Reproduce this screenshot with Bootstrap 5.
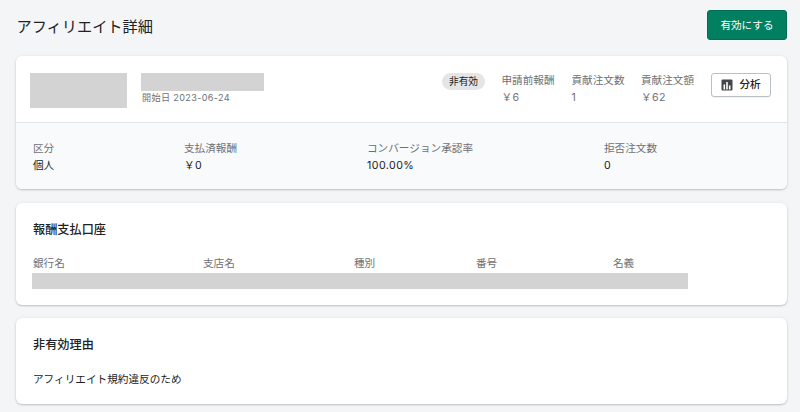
<!DOCTYPE html>
<html lang="ja">
<head>
<meta charset="utf-8">
<title>アフィリエイト詳細</title>
<link href="https://cdn.jsdelivr.net/npm/bootstrap@5.3.0/dist/css/bootstrap.min.css" rel="stylesheet">
<style>
html,body{height:412px;overflow:hidden}
body{background:#f4f5f7;color:#202223;font-family:Inter,"Noto Sans CJK JP",sans-serif;font-size:10.64px;line-height:15.2px}
.page-wrap{padding:10px 13px 0 16px}
.page-head{height:46px}
.page-title{font-size:15.2px;line-height:22px;font-weight:400;margin:0 0 0 .5px;padding-bottom:12px}
.btn-activate{background:#008060;border:1px solid #006e52;color:#fff;width:80px;height:30px;font-size:10.64px;line-height:15px;padding:0;border-radius:3px}
.sheet{background:#fff;border:0;border-radius:6px;box-shadow:0 0 4px rgba(23,24,24,.05),0 1px 2px rgba(0,0,0,.2);overflow:hidden}
.sheet-top{height:66px;padding:17px 16px 0 14px}
.thumb{width:97px;height:35px;background:#d3d3d3;margin-right:14px}
.shop-name{width:123px;height:18px;background:#d3d3d3}
.start-date{font-size:9.12px;line-height:14px;color:#6d7175;padding-left:1px;letter-spacing:.35px}
.state-pill{background:#e4e5e7;border-radius:9px;width:43px;height:17px;font-size:9.7px;line-height:17px;text-align:center;margin-right:16.500px}
.metric{width:70px;color:#6d7175}
.metric-narrow{width:69.500px}
.metric div+div{margin-top:2px}
.num-val{letter-spacing:.45px}
.btn-analysis{width:60px;height:24px;background:#fff;border:1px solid #babfc3;border-radius:3px;font-size:10.64px;font-weight:500;line-height:14px;padding:0;color:#202223;box-shadow:0 1px 0 rgba(0,0,0,.05);column-gap:6px}
.sheet-foot{height:67px;background:#f9fafb;border-top:1px solid #e1e3e5;padding:18px 0 0 17px}
.sheet-foot .num-val,.sheet-foot .plain-val{margin-top:1.500px}
.muted-label{color:#6d7175}
.f1{width:151px}.f2{width:183px}.f3{width:237px}
.gap-card{margin-top:14px}
.sheet-pad{padding:18px 17px 0 17px}
.sec-title{font-size:12.16px;line-height:17px;font-weight:500;margin:0}
.bank-row{margin-top:18px}
.b1{width:170px}.b2{width:151px}.b3{width:122px}.b4{width:137px}
.bank-bar{width:656px;height:16px;background:#d3d3d3;margin:2px 0 0 -1px}
.card-bank{height:102px}
.card-reason{height:86px;margin-top:13px}
.reason-text{margin-top:19px}
</style>
</head>
<body>
<div class="page-wrap">
  <div class="page-head d-flex justify-content-between">
    <h1 class="page-title d-flex align-items-center">アフィリエイト詳細</h1>
    <button class="btn btn-activate" type="button">有効にする</button>
  </div>

  <div class="sheet">
    <div class="sheet-top d-flex align-items-start">
      <div class="thumb"></div>
      <div>
        <div class="shop-name"></div>
        <div class="start-date">開始日 2023-06-24</div>
      </div>
      <div class="ms-auto d-flex align-items-start">
        <div class="state-pill">非有効</div>
        <div class="metric"><div>申請前報酬</div><div class="num-val">￥6</div></div>
        <div class="metric metric-narrow"><div>貢献注文数</div><div class="num-val">1</div></div>
        <div class="metric"><div>貢献注文額</div><div class="num-val">￥62</div></div>
        <button class="btn btn-analysis d-flex align-items-center justify-content-center" type="button">
          <svg width="12" height="12" viewBox="0 0 12 12" aria-hidden="true"><rect x=".5" y=".5" width="11" height="11" rx="1" fill="#44474a"/><path d="M2.5 5.500h1.600v5H2.500zM5.200 3h1.600v7.500H5.200zM7.900 6.500h1.600v4H7.900z" fill="#fff"/></svg>
          <span>分析</span>
        </button>
      </div>
    </div>
    <div class="sheet-foot d-flex">
      <div class="f1"><div class="muted-label">区分</div><div class="plain-val">個人</div></div>
      <div class="f2"><div class="muted-label">支払済報酬</div><div class="num-val">￥0</div></div>
      <div class="f3"><div class="muted-label">コンバージョン承認率</div><div class="num-val">100.00%</div></div>
      <div><div class="muted-label">拒否注文数</div><div class="num-val">0</div></div>
    </div>
  </div>

  <div class="sheet gap-card card-bank sheet-pad">
    <h2 class="sec-title">報酬支払口座</h2>
    <div class="bank-row d-flex muted-label">
      <div class="b1">銀行名</div>
      <div class="b2">支店名</div>
      <div class="b3">種別</div>
      <div class="b4">番号</div>
      <div>名義</div>
    </div>
    <div class="bank-bar"></div>
  </div>

  <div class="sheet card-reason sheet-pad">
    <h2 class="sec-title">非有効理由</h2>
    <div class="reason-text">アフィリエイト規約違反のため</div>
  </div>
</div>
<script src="https://cdn.jsdelivr.net/npm/bootstrap@5.3.0/dist/js/bootstrap.bundle.min.js"></script>
</body>
</html>
